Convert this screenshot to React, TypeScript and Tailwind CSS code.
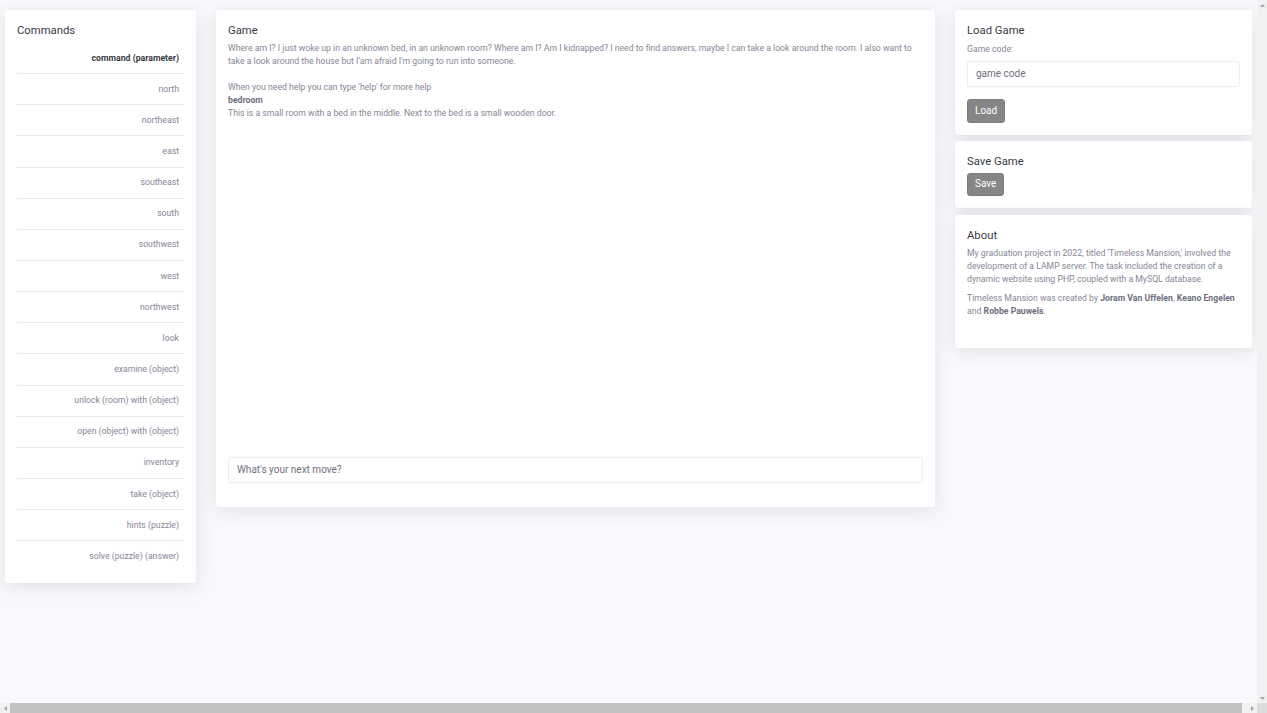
import React from 'react';

const commands = [
  'north',
  'northeast',
  'east',
  'southeast',
  'south',
  'southwest',
  'west',
  'northwest',
  'look',
  'examine (object)',
  'unlock (room) with (object)',
  'open (object) with (object)',
  'inventory',
  'take (object)',
  'hints (puzzle)',
  'solve (puzzle) (answer)',
];

function Card({ className = '', children }: { className?: string; children: React.ReactNode }) {
  return (
    <div className={`bg-white rounded-[3px] shadow-[0_3px_18px_0_rgba(58,59,69,0.13)] px-[12px] pt-[13px] ${className}`}>
      {children}
    </div>
  );
}

function Title({ children, className = '' }: { children: React.ReactNode; className?: string }) {
  return <h2 className={`text-[11.3px] leading-[16px] text-[#3a3b45] ${className}`}>{children}</h2>;
}

function CommandsCard() {
  return (
    <Card className="w-[191px] shrink-0 pb-[11px]">
      <Title className="mb-[4px]">Commands</Title>
      <div className="flex flex-col divide-y divide-[#e9eaf0]">
        <div className="h-[31.15px] flex items-center justify-end pr-[5px] text-[8.7px] font-bold text-[#3a3b45]">
          command (parameter)
        </div>
        {commands.map((c) => (
          <div key={c} className="h-[31.15px] flex items-center justify-end pr-[5px] text-[8.7px] text-[#858796]">
            {c}
          </div>
        ))}
      </div>
    </Card>
  );
}

function GameCard() {
  return (
    <Card className="w-[719px] shrink-0 pb-[24px]">
      <Title className="mb-[3px]">Game</Title>
      <div className="h-[414px] text-[8.7px] leading-[13px] text-[#858796] pr-[2px]">
        <p>
          Where am I? I just woke up in an unknown bed, in an unknown room? Where am I? Am I kidnapped? I need to find
          answers, maybe I can take a look around the room. I also want to take a look around the house but I'am afraid
          I'm going to run into someone.
        </p>
        <br />
        <p>When you need help you can type 'help' for more help</p>
        <p className="font-bold text-[#6e707e]">bedroom</p>
        <p>This is a small room with a bed in the middle. Next to the bed is a small wooden door.</p>
      </div>
      <input
        placeholder="What's your next move?"
        className="w-full h-[26px] border border-[#eceef3] rounded-[2px] px-[8px] text-[10px] text-[#6e707e] placeholder:text-[#6e707e] outline-none"
      />
    </Card>
  );
}

function Button({ children, h = 'h-[23px]' }: { children: React.ReactNode; h?: string }) {
  return (
    <button className={`${h} px-[7px] rounded-[3px] bg-[#868686] border border-[#7c7c7c] text-white text-[10px] leading-none`}>
      {children}
    </button>
  );
}

function SidePanel() {
  return (
    <div className="w-[297px] shrink-0 flex flex-col">
      <Card className="pb-[12px] mb-[6px]">
        <Title className="mb-[4px]">Load Game</Title>
        <p className="text-[8.7px] leading-[13px] text-[#858796] mb-[4px]">Game code:</p>
        <input
          placeholder="game code"
          className="w-full h-[26px] border border-[#eceef3] rounded-[2px] px-[8px] text-[10px] text-[#6e707e] placeholder:text-[#6e707e] outline-none mb-[12px]"
        />
        <div className="flex">
          <Button h="h-[24px]">Load</Button>
        </div>
      </Card>
      <Card className="pb-[12px] mb-[7px]">
        <Title className="mb-[3px]">Save Game</Title>
        <div className="flex">
          <Button>Save</Button>
        </div>
      </Card>
      <Card className="pb-[30px]">
        <Title className="mb-[3px]">About</Title>
        <div className="text-[8.7px] leading-[13px] text-[#858796]">
          <p className="mb-[6px]">
            My graduation project in 2022, titled 'Timeless Mansion,' involved the development of a LAMP server. The task
            included the creation of a dynamic website using PHP, coupled with a MySQL database.
          </p>
          <p>
            Timeless Mansion was created by <b className="text-[#6e707e]">Joram Van Uffelen</b>,{' '}
            <b className="text-[#6e707e]">Keano Engelen</b> and <b className="text-[#6e707e]">Robbe Pauwels</b>.
          </p>
        </div>
      </Card>
    </div>
  );
}

function Arrow({ dir }: { dir: 'up' | 'down' | 'left' | 'right' }) {
  const pts = {
    up: '0,4 2.5,1 5,4',
    down: '0,1 2.5,4 5,1',
    left: '4,0 1,2.5 4,5',
    right: '1,0 4,2.5 1,5',
  }[dir];
  return (
    <div className="w-[10px] h-[10px] flex items-center justify-center shrink-0">
      <svg width="5" height="5" viewBox="0 0 5 5">
        <polygon points={pts} fill="#a3a3a3" />
      </svg>
    </div>
  );
}

export default function App() {
  return (
    <div className="h-screen w-full flex flex-col overflow-hidden bg-[#f8f9fc] font-['Roboto','Liberation_Sans',sans-serif]">
      <div className="flex-1 flex min-h-0">
        <div className="flex-1 min-w-0 overflow-hidden">
          <div className="flex items-start gap-[20px] pl-[5px] pt-[10px]">
            <CommandsCard />
            <GameCard />
            <SidePanel />
          </div>
        </div>
        {/* vertical scrollbar (no thumb) */}
        <div className="w-[10px] shrink-0 bg-[#f1f1f1] flex flex-col justify-between">
          <Arrow dir="up" />
          <Arrow dir="down" />
        </div>
      </div>
      {/* horizontal scrollbar */}
      <div className="h-[10px] shrink-0 flex bg-[#f1f1f1]">
        <Arrow dir="left" />
        <div className="flex-1 flex items-stretch pr-[5px]">
          <div className="flex-1 bg-[#c1c1c1]" />
        </div>
        <Arrow dir="right" />
        <div className="w-[10px] bg-[#dcdcdc]" />
      </div>
    </div>
  );
}
